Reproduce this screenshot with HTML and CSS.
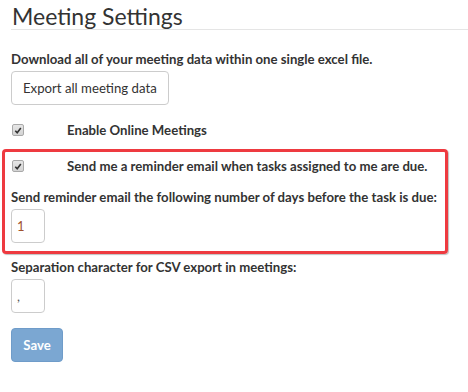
FILE: index.html
```html
<!DOCTYPE html>
<html>
<head>
<meta charset="utf-8">
<link rel="stylesheet" href="styles.css">
</head>
<body>
<div class="page">
  <h1 class="title">Meeting Settings</h1>
  <p class="label download">Download all of your meeting data within one single excel file.</p>
  <button class="btn btn-default">Export all meeting data</button>
  <div class="check-row first">
    <span class="check"><svg width="11" height="11" viewBox="0 0 11 11"><path d="M2.5 5.8 L4.6 7.9 L8.6 2.8" fill="none" stroke="#333" stroke-width="1.8"/></svg></span>
    <span class="label">Enable Online Meetings</span>
  </div>
  <div class="highlight">
    <div class="check-row">
      <span class="check"><svg width="11" height="11" viewBox="0 0 11 11"><path d="M2.5 5.8 L4.6 7.9 L8.6 2.8" fill="none" stroke="#333" stroke-width="1.8"/></svg></span>
      <span class="label">Send me a reminder email when tasks assigned to me are due.</span>
    </div>
    <p class="label field-label">Send reminder email the following number of days before the task is due:</p>
    <div class="input orange">1</div>
  </div>
  <p class="label field-label sep">Separation character for CSV export in meetings:</p>
  <div class="input">,</div>
  <button class="btn btn-primary">Save</button>
</div>
</body>
</html>
```
FILE: styles.css
```css
html, body { margin: 0; padding: 0; background: #fff; }
body { font-family: "Lato", "Open Sans", sans-serif; color: #333; font-size: 13.2px; }
.page { padding: 0 0 0 11px; }
.title {
  margin: 0;
  padding: 3px 0 0 1px;
  height: 26px;
  font-size: 23px;
  font-weight: 400;
  line-height: 26px;
  color: #333;
  border-bottom: 1px solid #e5e5e5;
}
.label { font-weight: 700; font-size: 13.2px; margin: 0; line-height: 16px; white-space: nowrap; }
.download { margin-top: 21px; }
.btn {
  font-family: inherit;
  font-size: 13.2px;
  border-radius: 4px;
  display: block;
  cursor: pointer;
}
.btn-default {
  margin-top: 4px;
  height: 34px;
  padding: 0 11px;
  background: #fff;
  border: 1px solid #ccc;
  color: #333;
}
.check-row { display: flex; align-items: center; }
.check-row.first { margin-top: 17px; }
.check {
  margin-left: 1px;
  margin-right: 43px;
  border: 1px solid #a9a9a9;
  border-radius: 2px;
  background: linear-gradient(#e6e6e6, #d4d4d4);
  display: flex;
  align-items: center;
  justify-content: center;
  box-sizing: border-box;
  width: 12px; height: 12px;
}
.check svg { display: block; }
.highlight {
  margin: 11px 0 0 -9px;
  width: 434px;
  padding: 6px 0 8px 6px;
  border: 3px solid #ee3a40;
  border-radius: 4px;
  box-shadow: 1px 1px 1px rgba(0,0,0,0.25);
}
.field-label { margin-top: 15px; }
.input {
  margin-top: 4px;
  width: 34px;
  height: 34px;
  box-sizing: border-box;
  border: 1px solid #ccc;
  border-radius: 4px;
  font-size: 13px;
  line-height: 32px;
  padding-left: 5px;
  color: #555;
}
.input.orange { color: #a0522d; }
.field-label.sep { margin-top: 5px; }
.btn-primary {
  margin-top: 15px;
  height: 34px;
  width: 52px;
  padding: 0;
  background: #7ba7d2;
  border: 1px solid #6f9cc9;
  color: #fff;
  font-weight: 700;
}
```
